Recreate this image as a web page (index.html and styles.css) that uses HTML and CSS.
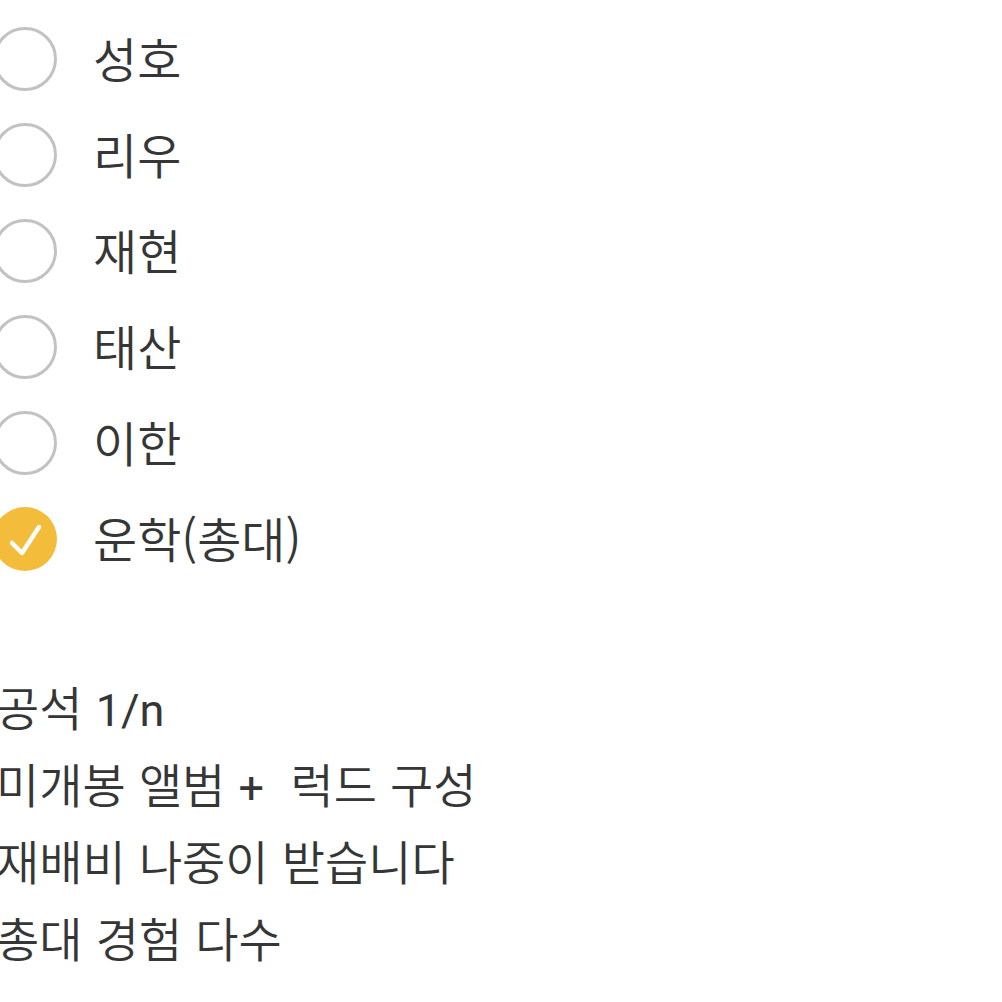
FILE: index.html
```html
<!DOCTYPE html>
<html lang="ko">
<head>
<meta charset="utf-8">
<link rel="stylesheet" href="styles.css">
</head>
<body>
<ul class="options">
  <li class="option"><span class="radio"></span><span class="label">성호</span></li>
  <li class="option"><span class="radio"></span><span class="label">리우</span></li>
  <li class="option"><span class="radio"></span><span class="label">재현</span></li>
  <li class="option"><span class="radio"></span><span class="label">태산</span></li>
  <li class="option"><span class="radio"></span><span class="label">이한</span></li>
  <li class="option"><span class="radio checked"><svg class="check" viewBox="0 0 64 64" width="64" height="64"><path d="M19 36 L29 46 L46 20" fill="none" stroke="#fff" stroke-width="4.5" stroke-linecap="round" stroke-linejoin="round"/></svg></span><span class="label">운학(총대)</span></li>
</ul>
<div class="notes">
  <p class="note">공석 <span class="latin">1/n</span></p>
  <p class="note">미개봉 앨범 <span class="latin">+</span>&nbsp; 럭드 구성</p>
  <p class="note">재배비 나중이 받습니다</p>
  <p class="note">총대 경험 다수</p>
</div>
</body>
</html>
```
FILE: styles.css
```css
html, body {
  margin: 0;
  padding: 0;
  background: #ffffff;
}
body {
  width: 1002px;
  height: 1002px;
  overflow: hidden;
  font-family: "Noto Sans CJK KR", sans-serif;
  font-weight: 350;
  color: #363636;
  font-size: 47px;
}
.options {
  list-style: none;
  margin: 0;
  padding: 11px 0 0 0;
}
.option {
  height: 96px;
  display: flex;
  align-items: center;
  gap: 36px;
}
.radio {
  flex: none;
  width: 64px;
  height: 64px;
  margin-left: -7px;
  box-sizing: border-box;
  border: 3px solid #c2c2c2;
  border-radius: 50%;
  display: flex;
  align-items: center;
  justify-content: center;
}
.radio.checked {
  border: none;
  background: #f3bc3a;
}
.check {
  display: block;
}
.label {
  font-size: 48px;
  line-height: 60px;
  margin-top: -4px;
}
.notes {
  margin-top: 80px;
  margin-left: -4px;
}
.note {
  margin: 0;
  height: 77px;
  line-height: 77px;
  white-space: pre;
}
.latin {
  font-family: Roboto, sans-serif;
  font-weight: 400;
  font-size: 45px;
  line-height: 1;
}
```
